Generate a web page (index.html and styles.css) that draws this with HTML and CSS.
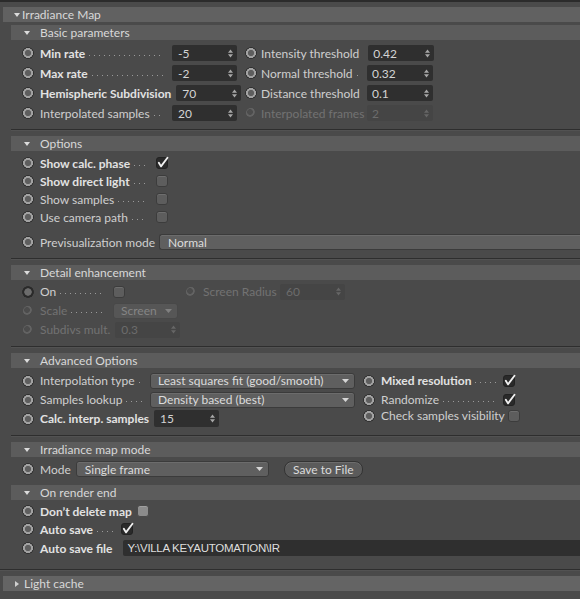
FILE: index.html
```html
<!DOCTYPE html>
<html>
<head>
<meta charset="utf-8">
<link rel="stylesheet" href="styles.css">
</head>
<body>
<div class="topline"></div>
<div class="panel">
  <div class="ghead"><i class="tri-d"></i><span class="gtitle">Irradiance Map</span></div>
  <div class="gbody">

    <section class="sec basic">
      <div class="shead"><i class="tri-d"></i><span>Basic parameters</span></div>
      <div class="sbody grid2">
        <div class="row"><i class="rb"></i><span class="lbl b"><span>Min rate</span><i class="dots"></i></span><span class="fld"><span>-5</span><svg class="spin" viewBox="0 0 5 9"><path d="M0 3.8 2.5 0.6 5 3.8Z M0 5.2 2.5 8.4 5 5.2Z"/></svg></span></div>
        <div class="row"><i class="rb"></i><span class="lbl"><span>Intensity threshold</span><i class="dots"></i></span><span class="fld"><span>0.42</span><svg class="spin" viewBox="0 0 5 9"><path d="M0 3.8 2.5 0.6 5 3.8Z M0 5.2 2.5 8.4 5 5.2Z"/></svg></span></div>
        <div class="row"><i class="rb"></i><span class="lbl b"><span>Max rate</span><i class="dots"></i></span><span class="fld"><span>-2</span><svg class="spin" viewBox="0 0 5 9"><path d="M0 3.8 2.5 0.6 5 3.8Z M0 5.2 2.5 8.4 5 5.2Z"/></svg></span></div>
        <div class="row"><i class="rb"></i><span class="lbl"><span>Normal threshold</span><i class="dots"></i></span><span class="fld"><span>0.32</span><svg class="spin" viewBox="0 0 5 9"><path d="M0 3.8 2.5 0.6 5 3.8Z M0 5.2 2.5 8.4 5 5.2Z"/></svg></span></div>
        <div class="row"><i class="rb"></i><span class="lbl b"><span>Hemispheric Subdivision</span></span><span class="fld"><span>70</span><svg class="spin" viewBox="0 0 5 9"><path d="M0 3.8 2.5 0.6 5 3.8Z M0 5.2 2.5 8.4 5 5.2Z"/></svg></span></div>
        <div class="row"><i class="rb"></i><span class="lbl"><span>Distance threshold</span></span><span class="fld"><span>0.1</span><svg class="spin" viewBox="0 0 5 9"><path d="M0 3.8 2.5 0.6 5 3.8Z M0 5.2 2.5 8.4 5 5.2Z"/></svg></span></div>
        <div class="row"><i class="rb"></i><span class="lbl"><span>Interpolated samples</span><i class="dots"></i></span><span class="fld"><span>20</span><svg class="spin" viewBox="0 0 5 9"><path d="M0 3.8 2.5 0.6 5 3.8Z M0 5.2 2.5 8.4 5 5.2Z"/></svg></span></div>
        <div class="row dis"><i class="rb rb-dis"></i><span class="lbl"><span>Interpolated frames</span></span><span class="fld fld-dis"><span>2</span><svg class="spin" viewBox="0 0 5 9"><path d="M0 3.8 2.5 0.6 5 3.8Z M0 5.2 2.5 8.4 5 5.2Z"/></svg></span></div>
      </div>
      <div class="sep"></div>
    </section>

    <section class="sec options">
      <div class="shead"><i class="tri-d"></i><span>Options</span></div>
      <div class="sbody">
        <div class="row"><i class="rb"></i><span class="lbl b"><span>Show calc. phase</span><i class="dots"></i></span><span class="cb on"><svg viewBox="0 0 12 12"><path d="M2.6 6.2 4.6 9.6 10.6 1.6"/></svg></span></div>
        <div class="row"><i class="rb"></i><span class="lbl b"><span>Show direct light</span><i class="dots"></i></span><span class="cb"></span></div>
        <div class="row"><i class="rb"></i><span class="lbl"><span>Show samples</span><i class="dots"></i></span><span class="cb"></span></div>
        <div class="row"><i class="rb"></i><span class="lbl"><span>Use camera path</span><i class="dots"></i></span><span class="cb"></span></div>
        <div class="row previz"><i class="rb"></i><span class="lbl"><span>Previsualization mode</span></span><span class="dd dd-wide"><span>Normal</span></span></div>
      </div>
      <div class="sep"></div>
    </section>

    <section class="sec detail">
      <div class="shead"><i class="tri-d"></i><span>Detail enhancement</span></div>
      <div class="sbody grid2">
        <div class="row"><i class="rb rb-dark"></i><span class="lbl"><span>On</span><i class="dots"></i></span><span class="cb"></span></div>
        <div class="row dis"><i class="rb rb-dis"></i><span class="lbl"><span>Screen Radius</span></span><span class="fld fld-dis"><span>60</span><svg class="spin" viewBox="0 0 5 9"><path d="M0 3.8 2.5 0.6 5 3.8Z M0 5.2 2.5 8.4 5 5.2Z"/></svg></span></div>
        <div class="row dis"><i class="rb rb-dis"></i><span class="lbl"><span>Scale</span><i class="dots"></i></span><span class="dd dd-dis dd-small"><span>Screen</span><svg class="arr" viewBox="0 0 7 4"><path d="M0 0H7L3.5 4Z"/></svg></span></div>
        <div></div>
        <div class="row dis"><i class="rb rb-dis"></i><span class="lbl"><span>Subdivs mult.</span></span><span class="fld fld-dis"><span>0.3</span><svg class="spin" viewBox="0 0 5 9"><path d="M0 3.8 2.5 0.6 5 3.8Z M0 5.2 2.5 8.4 5 5.2Z"/></svg></span></div>
        <div></div>
      </div>
      <div class="sep"></div>
    </section>

    <section class="sec adv">
      <div class="shead"><i class="tri-d"></i><span>Advanced Options</span></div>
      <div class="sbody grid2">
        <div class="row"><i class="rb"></i><span class="lbl"><span>Interpolation type</span><i class="dots"></i></span><span class="dd dd-mid"><span>Least squares fit (good/smooth)</span><svg class="arr" viewBox="0 0 7 4"><path d="M0 0H7L3.5 4Z"/></svg></span></div>
        <div class="row"><i class="rb"></i><span class="lbl b"><span>Mixed resolution</span><i class="dots"></i></span><span class="cb on"><svg viewBox="0 0 12 12"><path d="M2.6 6.2 4.6 9.6 10.6 1.6"/></svg></span></div>
        <div class="row"><i class="rb"></i><span class="lbl"><span>Samples lookup</span><i class="dots"></i></span><span class="dd dd-mid"><span>Density based (best)</span><svg class="arr" viewBox="0 0 7 4"><path d="M0 0H7L3.5 4Z"/></svg></span></div>
        <div class="row"><i class="rb"></i><span class="lbl"><span>Randomize</span><i class="dots"></i></span><span class="cb on"><svg viewBox="0 0 12 12"><path d="M2.6 6.2 4.6 9.6 10.6 1.6"/></svg></span></div>
        <div class="row"><i class="rb"></i><span class="lbl b"><span>Calc. interp. samples</span></span><span class="fld"><span>15</span><svg class="spin" viewBox="0 0 5 9"><path d="M0 3.8 2.5 0.6 5 3.8Z M0 5.2 2.5 8.4 5 5.2Z"/></svg></span></div>
        <div class="row r-up"><i class="rb"></i><span class="lbl"><span>Check samples visibility</span></span><span class="cb"></span></div>
      </div>
      <div class="sep"></div>
    </section>

    <section class="sec mode">
      <div class="shead"><i class="tri-d"></i><span>Irradiance map mode</span></div>
      <div class="sbody">
        <div class="row"><i class="rb"></i><span class="lbl"><span>Mode</span></span><span class="dd dd-mode"><span>Single frame</span><svg class="arr" viewBox="0 0 7 4"><path d="M0 0H7L3.5 4Z"/></svg></span><span class="btn">Save to File</span></div>
      </div>
    </section>

    <section class="sec render">
      <div class="shead"><i class="tri-d"></i><span>On render end</span></div>
      <div class="sbody">
        <div class="row"><i class="rb"></i><span class="lbl b"><span>Don’t delete map</span></span><span class="cb cb-light"></span></div>
        <div class="row"><i class="rb"></i><span class="lbl b"><span>Auto save</span><i class="dots"></i></span><span class="cb on"><svg viewBox="0 0 12 12"><path d="M2.6 6.2 4.6 9.6 10.6 1.6"/></svg></span></div>
        <div class="row tall"><i class="rb"></i><span class="lbl b"><span>Auto save file</span><i class="dots"></i></span><span class="fld fld-path"><span>Y:\VILLA KEYAUTOMATION\IR</span></span></div>
      </div>
    </section>
  </div>
  <div class="sep sep-full"></div>
  <div class="ghead lc"><i class="tri-r"></i><span class="gtitle">Light cache</span></div>
</div>
</body>
</html>
```

FILE: styles.css
```css
* { box-sizing: border-box; }
html, body { margin: 0; padding: 0; }
body {
  width: 580px;
  height: 599px;
  overflow: hidden;
  background: #4a4a4a;
  font-family: Lato, "Open Sans", sans-serif;
  font-size: 12px;
  color: #cdcdcd;
}
.topline { height: 2px; background: #2b2b2b; }
.panel { padding: 5px 0 0 3px; width: 580px; }

.ghead {
  height: 15px;
  background: #616161;
  display: flex;
  align-items: center;
  padding-left: 11px;
  color: #d8d8d8;
  font-size: 12px;
  white-space: nowrap;
}
.gtitle { margin-left: 2px; }
.ghead.lc { padding-left: 12px; background: #646464; }
.ghead.lc .gtitle { margin-left: 5px; }

.tri-d {
  display: inline-block;
  width: 0; height: 0;
  border-left: 3px solid transparent;
  border-right: 3px solid transparent;
  border-top: 4px solid #dcdcdc;
}
.tri-r {
  display: inline-block;
  width: 0; height: 0;
  border-top: 3px solid transparent;
  border-bottom: 3px solid transparent;
  border-left: 4px solid #d0d0d0;
}

.gbody { margin-left: 8px; padding-top: 3px; }

.shead {
  height: 15px;
  background: #5c5c5c;
  display: flex;
  align-items: center;
  padding-left: 13px;
  color: #d8d8d8;
  white-space: nowrap;
}
.shead .tri-d { margin-right: 10px; }

.sbody { padding-left: 11px; }

.sep {
  height: 2px;
  border-top: 1px solid #2e2e2e;
  border-bottom: 1px solid #525252;
  margin-bottom: 5px;
}
.sep-full { margin-left: -3px; }

.row {
  display: flex;
  align-items: center;
  height: 20px;
  white-space: nowrap;
}

/* radio */
.rb {
  display: inline-block;
  flex: none;
  width: 12px; height: 12px;
  border-radius: 50%;
  background: radial-gradient(circle, #5e5e5e 0 2.8px, #a2a2a2 3.3px 4.8px, #2e2e2e 5.2px 5.8px, transparent 6.2px);
  margin-right: 6px;
}
.rb-dark {
  background: radial-gradient(circle, #6c6c6c 0 3.4px, #2a2a2a 4px 5.7px, transparent 6.2px);
}
.rb-dis {
  width: 10px; height: 10px;
  margin-left: 1px; margin-right: 7px;
  background: radial-gradient(circle at 40% 40%, #4c4c4c 0 2.6px, #636363 3.2px 4.4px, transparent 5px);
}

/* label with leader dots */
.lbl {
  display: flex;
  align-items: center;
  flex: none;
  color: #cfcfcf;
}
.lbl.b { font-weight: bold; color: #e2e2e2; }
.dots {
  flex: 1;
  align-self: stretch;
  margin: 0 3px 0 4px;
  background-image: linear-gradient(to right, #9a9a9a 1px, transparent 1px);
  background-size: 5px 1px;
  background-repeat: repeat-x;
  background-position: left bottom 5px;
}
.dis .lbl { color: #727272; }

/* spinner field */
.fld {
  position: relative;
  display: flex;
  align-items: center;
  flex: none;
  width: 65px;
  height: 16px;
  background: #2f2f2f;
  border-radius: 2px;
  padding-left: 6px;
  color: #d4d4d4;
}
.fld-dis { background: #454545; color: #6c6c6c; }
.spin {
  position: absolute;
  right: 4px; top: 3.5px;
  width: 5px; height: 9px;
  fill: #a8a8a8;
}
.fld-dis .spin { fill: #666; }
.fld-path {
  width: 470px;
  color: #dedede;
  font-family: "Liberation Sans Narrow", "Liberation Sans", sans-serif;
  letter-spacing: -0.3px;
  padding-left: 4px;
  font-size: 11.5px;
}

/* checkbox */
.cb {
  display: inline-block;
  flex: none;
  width: 12px; height: 12px;
  border-radius: 3px;
  background: #5d5d5d;
  border: 1px solid #3c3c3c;
  box-shadow: inset 0 1px 0 #6e6e6e;
  position: relative;
}
.cb-light { background: #8c8c8c; border-color: #4a4a4a; box-shadow: inset 0 1px 0 #a0a0a0; }
.cb.on { background: #2a2a2a; border-color: #222; box-shadow: none; }
.cb.on svg {
  position: absolute;
  left: -1px; top: -2px;
  width: 13px; height: 13px;
  fill: none;
  stroke: #f0f0f0;
  stroke-width: 1.7;
  stroke-linecap: round;
  stroke-linejoin: round;
}

/* dropdown */
.dd {
  position: relative;
  display: flex;
  align-items: center;
  flex: none;
  height: 16px;
  background: #5f5f5f;
  border: 1px solid #3b3b3b;
  border-radius: 3px;
  padding-left: 7px;
  color: #dcdcdc;
  box-shadow: inset 0 1px 0 #6c6c6c;
}
.dd .arr {
  position: absolute;
  right: 5px; top: 5px;
  width: 7px; height: 4px;
  fill: #d6d6d6;
}
.dd-dis { background: #565656; color: #858585; border-color: #484848; box-shadow: none; }
.dd-dis .arr { fill: #808080; }
.dd-small { width: 65px; }
.dd-mid { width: 205px; }
.dd-mode { width: 193px; }
.dd-wide { width: 450px; border-right: none; border-radius: 3px 0 0 3px; }

.btn {
  display: flex;
  align-items: center;
  justify-content: center;
  flex: none;
  width: 79px;
  height: 17px;
  margin-left: 15px;
  border-radius: 8px;
  background: #5b5b5b;
  border: 1px solid #333;
  box-shadow: inset 0 1px 0 #6d6d6d;
  color: #dcdcdc;
}

/* two-column grids */
.grid2 { display: grid; }

/* Basic parameters */
.basic .sbody { grid-template-columns: 223px 1fr; padding-top: 3px; padding-bottom: 6px; }
.basic .row { height: 20px; }
.basic .row:nth-child(odd) .lbl { min-width: 127px; margin-right: 5px; }
.basic .row:nth-child(even) .rb { margin-right: 4px; }
.basic .row:nth-child(even) .lbl { min-width: 104px; margin-right: 2px; }
.basic .row:nth-child(even) .rb-dis { margin-right: 5px; }
.basic .row:nth-child(even) .fld { width: 66px; padding-left: 5px; }

/* Options */
.options .sbody { padding-top: 3px; padding-bottom: 7px; }
.options .row { height: 18px; }
.options .lbl { min-width: 110px; margin-right: 6px; }
.options .row.previz { margin-top: 7px; }
.options .previz .lbl { min-width: 0; margin-right: 4px; }
.options .dd-wide { padding-left: 8px; }

/* Detail */
.detail .sbody { grid-template-columns: 163px 1fr; padding-top: 2px; padding-bottom: 7px; }
.detail .row { height: 19px; }
.detail .row:nth-child(odd) .lbl { min-width: 68px; margin-right: 5px; }
.detail .row:nth-child(2) .lbl { min-width: 75px; margin-right: 2px; }
.detail .row:nth-child(2) .rb-dis { margin-right: 7px; }
.detail .dd-small { padding-left: 7px; }

/* Advanced */
.adv .sbody { grid-template-columns: 341px 1fr; padding-top: 3px; padding-bottom: 7px; }
.adv .row { height: 19px; }
.adv .row:nth-child(odd) .lbl { min-width: 105px; margin-right: 5px; }
.adv .row:nth-child(even) .lbl { min-width: 119px; margin-right: 3px; }
.adv .row.r-up { margin-top: -3px; }
.adv .row:nth-child(5) .fld { height: 17px; }

/* Mode */
.mode .sbody { padding-top: 3px; padding-bottom: 7px; }
.mode .row { height: 18px; }
.mode .lbl { margin-right: 5px; }
.mode .dd-mode { padding-left: 8px; }

/* On render end */
.render .sbody { padding-top: 2px; padding-bottom: 11px; }
.render .row { height: 18px; }
.render .row.tall { height: 20px; }
.render .lbl { min-width: 76px; margin-right: 5px; }
.render .row.tall .lbl { margin-right: 4px; }
```
